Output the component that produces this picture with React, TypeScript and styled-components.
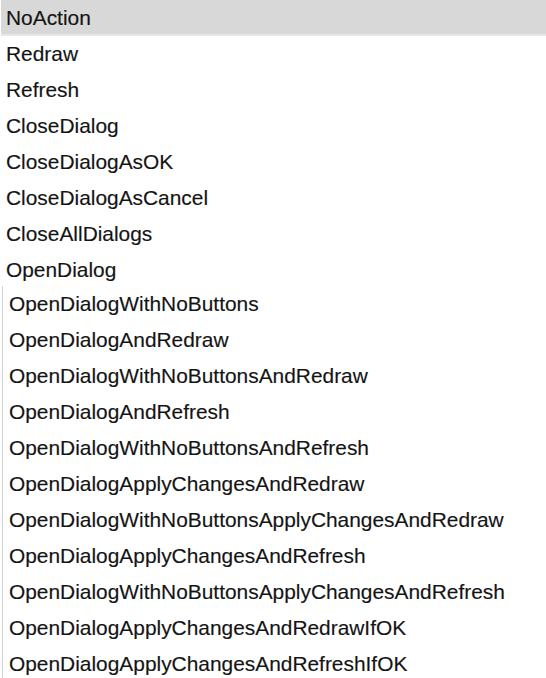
import styled, { createGlobalStyle } from "styled-components";

const GlobalStyle = createGlobalStyle`
    html, body {
        margin: 0;
        padding: 0;
        background: #ffffff;
    }
    body {
        font-family: "Liberation Sans", Arial, sans-serif;
        color: #141414;
    }
`;

const Page = styled.div`
    display: flex;
    flex-direction: column;
    width: 546px;
    height: 678px;
    overflow: hidden;
`;

const Group = styled.ul<{ $framed?: boolean }>`
    list-style: none;
    margin: 0;
    padding: 0;
    display: flex;
    flex-direction: column;
    ${(p) =>
        p.$framed
            ? `
        margin-top: -2px;
        margin-left: 2px;
        border-left: 1px solid #d2d2d2;
        flex: 1;
    `
            : ""}
`;

const Item = styled.li<{ $selected?: boolean; $indent: number }>`
    display: flex;
    align-items: center;
    height: 36px;
    padding-left: ${(p) => p.$indent}px;
    margin-left: ${(p) => (p.$selected ? 1 : 0)}px;
    font-size: 20.9px;
    white-space: nowrap;
    -webkit-text-stroke: 0.15px #141414;
    background: ${(p) => (p.$selected ? "#d8d8d8" : "transparent")};
    box-shadow: ${(p) => (p.$selected ? "inset 0 -2px 0 #e6e6e6" : "none")};
`;

const first = [
    "NoAction",
    "Redraw",
    "Refresh",
    "CloseDialog",
    "CloseDialogAsOK",
    "CloseDialogAsCancel",
    "CloseAllDialogs",
    "OpenDialog",
];

const second = [
    "OpenDialogWithNoButtons",
    "OpenDialogAndRedraw",
    "OpenDialogWithNoButtonsAndRedraw",
    "OpenDialogAndRefresh",
    "OpenDialogWithNoButtonsAndRefresh",
    "OpenDialogApplyChangesAndRedraw",
    "OpenDialogWithNoButtonsApplyChangesAndRedraw",
    "OpenDialogApplyChangesAndRefresh",
    "OpenDialogWithNoButtonsApplyChangesAndRefresh",
    "OpenDialogApplyChangesAndRedrawIfOK",
    "OpenDialogApplyChangesAndRefreshIfOK",
];

export default function App() {
    return (
        <>
            <GlobalStyle />
            <Page>
                <Group>
                    {first.map((name, i) => (
                        <Item key={name} $selected={i === 0} $indent={i === 0 ? 5 : 6}>
                            {name}
                        </Item>
                    ))}
                </Group>
                <Group $framed>
                    {second.map((name) => (
                        <Item key={name} $indent={6}>
                            {name}
                        </Item>
                    ))}
                </Group>
            </Page>
        </>
    );
}
